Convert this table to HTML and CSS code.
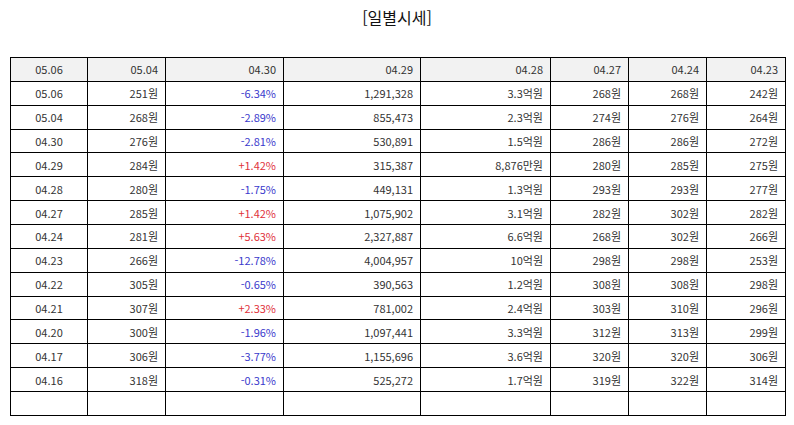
FILE: index.html
```html
<!DOCTYPE html>
<html lang="ko">
<head>
<meta charset="utf-8">
<link rel="stylesheet" href="styles.css">
</head>
<body>
<div class="page">
  <h2 class="title">[일별시세]</h2>
  <table class="quotes">
    <colgroup>
      <col class="c1"><col class="c2"><col class="c3"><col class="c4"><col class="c5"><col class="c6"><col class="c7"><col class="c8">
    </colgroup>
    <thead>
      <tr><th class="date">05.06</th><th>05.04</th><th>04.30</th><th>04.29</th><th>04.28</th><th>04.27</th><th>04.24</th><th>04.23</th></tr>
    </thead>
    <tbody>
      <tr><td class="date">05.06</td><td>251원</td><td class="down">-6.34%</td><td>1,291,328</td><td>3.3억원</td><td>268원</td><td>268원</td><td>242원</td></tr>
      <tr><td class="date">05.04</td><td>268원</td><td class="down">-2.89%</td><td>855,473</td><td>2.3억원</td><td>274원</td><td>276원</td><td>264원</td></tr>
      <tr><td class="date">04.30</td><td>276원</td><td class="down">-2.81%</td><td>530,891</td><td>1.5억원</td><td>286원</td><td>286원</td><td>272원</td></tr>
      <tr><td class="date">04.29</td><td>284원</td><td class="up">+1.42%</td><td>315,387</td><td>8,876만원</td><td>280원</td><td>285원</td><td>275원</td></tr>
      <tr><td class="date">04.28</td><td>280원</td><td class="down">-1.75%</td><td>449,131</td><td>1.3억원</td><td>293원</td><td>293원</td><td>277원</td></tr>
      <tr><td class="date">04.27</td><td>285원</td><td class="up">+1.42%</td><td>1,075,902</td><td>3.1억원</td><td>282원</td><td>302원</td><td>282원</td></tr>
      <tr><td class="date">04.24</td><td>281원</td><td class="up">+5.63%</td><td>2,327,887</td><td>6.6억원</td><td>268원</td><td>302원</td><td>266원</td></tr>
      <tr><td class="date">04.23</td><td>266원</td><td class="down">-12.78%</td><td>4,004,957</td><td>10억원</td><td>298원</td><td>298원</td><td>253원</td></tr>
      <tr><td class="date">04.22</td><td>305원</td><td class="down">-0.65%</td><td>390,563</td><td>1.2억원</td><td>308원</td><td>308원</td><td>298원</td></tr>
      <tr><td class="date">04.21</td><td>307원</td><td class="up">+2.33%</td><td>781,002</td><td>2.4억원</td><td>303원</td><td>310원</td><td>296원</td></tr>
      <tr><td class="date">04.20</td><td>300원</td><td class="down">-1.96%</td><td>1,097,441</td><td>3.3억원</td><td>312원</td><td>313원</td><td>299원</td></tr>
      <tr><td class="date">04.17</td><td>306원</td><td class="down">-3.77%</td><td>1,155,696</td><td>3.6억원</td><td>320원</td><td>320원</td><td>306원</td></tr>
      <tr><td class="date">04.16</td><td>318원</td><td class="down">-0.31%</td><td>525,272</td><td>1.7억원</td><td>319원</td><td>322원</td><td>314원</td></tr>
      <tr class="empty"><td></td><td></td><td></td><td></td><td></td><td></td><td></td><td></td></tr>
    </tbody>
  </table>
</div>
</body>
</html>
```

FILE: styles.css
```css
html, body {
  margin: 0;
  padding: 0;
  background: #fff;
}

.page {
  padding: 0 10px;
  font-family: "Noto Sans CJK KR", "Noto Sans", sans-serif;
  color: #222;
}

.title {
  margin: 0;
  padding-top: 5px;
  height: 57px;
  box-sizing: border-box;
  text-align: center;
  font-size: 16px;
  font-weight: 400;
  line-height: 24px;
  color: #111;
}

.quotes {
  width: 775px;
  border-collapse: collapse;
  table-layout: fixed;
  font-size: 11px;
}

.c1 { width: 77px; }
.c2 { width: 78px; }
.c3 { width: 118px; }
.c4 { width: 137px; }
.c5 { width: 130px; }
.c6 { width: 78px; }
.c7 { width: 78px; }
.c8 { width: 79px; }

.quotes th,
.quotes td {
  border: 1px solid #000;
  height: 22.87px;
  padding: 0 7px 0 4px;
  text-align: right;
  font-weight: 400;
  line-height: 14px;
  color: #333;
  white-space: nowrap;
}

.quotes thead th {
  background: #f2f2f2;
}

.quotes .date {
  text-align: center;
  padding: 0;
}

.quotes .down { color: #3a3acc; }
.quotes .up { color: #e0313a; }
```
